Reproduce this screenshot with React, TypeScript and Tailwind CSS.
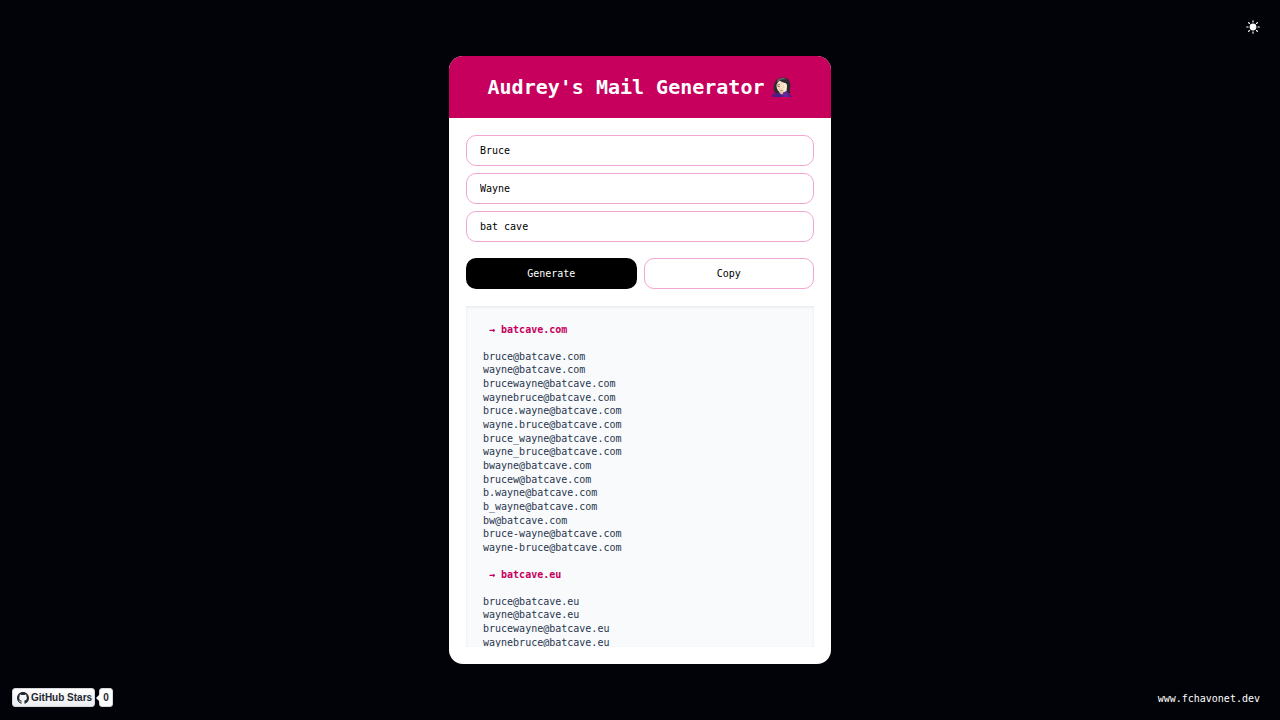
import { useState } from "react";

const MONO = "font-['DejaVu_Sans_Mono',monospace]";

const FIELDS = [
  { id: "first-name", label: "First name" },
  { id: "last-name", label: "Last name" },
  { id: "company", label: "Company" },
] as const;

type Values = Record<(typeof FIELDS)[number]["id"], string>;

function localParts(first: string, last: string): string[] {
  const f = first.charAt(0);
  const l = last.charAt(0);
  return [
    first,
    last,
    first + last,
    last + first,
    `${first}.${last}`,
    `${last}.${first}`,
    `${first}_${last}`,
    `${last}_${first}`,
    f + last,
    first + l,
    `${f}.${last}`,
    `${f}_${last}`,
    f + l,
    `${first}-${last}`,
    `${last}-${first}`,
  ];
}

function buildGroups(values: Values) {
  const clean = (text: string) => text.toLowerCase().replace(/\s+/g, "");
  const names = localParts(clean(values["first-name"]), clean(values["last-name"]));
  return ["com", "eu"].map((tld) => {
    const domain = `${clean(values.company)}.${tld}`;
    return { domain, mails: names.map((name) => `${name}@${domain}`) };
  });
}

function FacepalmEmoji() {
  return (
    <svg viewBox="0 0 40 40" className="size-5 shrink-0" role="img" aria-label="Woman facepalming">
      <path d="M4 29C2 18 5 2 20 1c15-1 19 13 16 22-1 4 0 6 1 9l-14 3-14-2z" fill="#2c2a30" />
      <path d="M10 7c5-6 14-6 19-2-7-1-14 0-18 5z" fill="#6a6768" />
      <path d="M0 40c0-6 4-8 11-8l13 1c8-1 14 1 16 7z" fill="#4b1d86" />
      <path d="M15 26h9v7c-3 3-7 2-9-1z" fill="#d9b292" />
      <path d="M9 17c0-4 3-6 6-10 4 3 9 4 13 6 3 8 0 18-9 18-6 0-10-7-10-14z" fill="#f4d9bc" />
      <path d="M15 26c2 2 5 2 7 0" fill="none" stroke="#9c5a48" strokeWidth="1.4" />
      <path d="M11 16l4-1M12 19h3" fill="none" stroke="#5a4038" strokeWidth="1.3" strokeLinecap="round" />
      <path d="M16 21c1-5 5-8 9-9 3 0 5 2 5 6l-1 11-6 3c2-4 1-7-2-9z" fill="#fdebd3" />
      <path d="M17 20l7-4M19 23l6-3" stroke="#d3a888" strokeWidth="1" fill="none" />
      <path d="M22 31l7-3 6 12H22z" fill="#5f2a9d" />
    </svg>
  );
}

function SunIcon() {
  return (
    <svg viewBox="0 0 16 16" className="size-[14px]" fill="currentColor" aria-hidden="true">
      <circle cx="8" cy="8" r="3.9" />
      <path
        d="M8 .8v1.6M8 13.6v1.6M.8 8h1.6M13.6 8h1.6M2.9 2.9l1.1 1.1M12 12l1.1 1.1M2.9 13.1l1.1-1.1M12 4l1.1-1.1"
        stroke="currentColor"
        strokeWidth="1.3"
        strokeLinecap="round"
      />
    </svg>
  );
}

function GitHubMark() {
  return (
    <svg viewBox="0 0 16 16" className="size-3" fill="currentColor" aria-hidden="true">
      <path d="M8 0C3.58 0 0 3.58 0 8c0 3.54 2.29 6.53 5.47 7.59.4.07.55-.17.55-.38 0-.19-.01-.82-.01-1.49-2.01.37-2.53-.49-2.69-.94-.09-.23-.48-.94-.82-1.13-.28-.15-.68-.52-.01-.53.63-.01 1.08.58 1.23.82.72 1.21 1.87.87 2.33.66.07-.52.28-.87.51-1.07-1.78-.2-3.64-.89-3.64-3.95 0-.87.31-1.59.82-2.15-.08-.2-.36-1.02.08-2.12 0 0 .67-.21 2.2.82.64-.18 1.32-.27 2-.27s1.36.09 2 .27c1.53-1.04 2.2-.82 2.2-.82.44 1.1.16 1.92.08 2.12.51.56.82 1.27.82 2.15 0 3.07-1.87 3.75-3.65 3.95.29.25.54.73.54 1.48 0 1.07-.01 1.93-.01 2.2 0 .21.15.46.55.38A8.01 8.01 0 0 0 16 8c0-4.42-3.58-8-8-8z" />
    </svg>
  );
}

export default function App() {
  const [values, setValues] = useState<Values>({
    "first-name": "Bruce",
    "last-name": "Wayne",
    company: "bat cave",
  });
  const [groups, setGroups] = useState(() => buildGroups(values));

  const copyAll = () => {
    void navigator.clipboard?.writeText(groups.flatMap((g) => g.mails).join("\n"));
  };

  return (
    <div className={`relative flex h-screen flex-col items-center bg-[#020308] px-4 py-14 text-[10px] leading-[14px] ${MONO}`}>
      <button type="button" aria-label="Toggle theme" className="absolute top-5 right-5 text-white">
        <SunIcon />
      </button>

      <main className="flex min-h-0 w-full max-w-[382px] flex-1 flex-col overflow-hidden rounded-[14px] bg-white">
        <header className="flex items-center justify-center gap-2 bg-[#c6005c] py-[17px] text-white">
          <h1 className="text-xl leading-7 font-bold whitespace-nowrap">Audrey's Mail Generator</h1>
          <FacepalmEmoji />
        </header>

        <form
          className="flex min-h-0 flex-1 flex-col p-[17px]"
          onSubmit={(event) => {
            event.preventDefault();
            setGroups(buildGroups(values));
          }}
        >
          <div className="flex flex-col gap-[7px]">
            {FIELDS.map(({ id, label }) => (
              <div key={id} className="flex">
                <label htmlFor={id} className="hidden">
                  {label}
                </label>
                <input
                  id={id}
                  type="text"
                  value={values[id]}
                  onChange={(event) => setValues({ ...values, [id]: event.target.value })}
                  className="h-[31px] w-full rounded-[10px] border border-[#f2a6d2] bg-white px-[13px] text-black outline-none"
                />
              </div>
            ))}
          </div>

          <div className="mt-4 grid grid-cols-2 gap-[7px]">
            <button type="submit" className="h-[31px] rounded-[10px] bg-black text-white">
              Generate
            </button>
            <button
              type="button"
              onClick={copyAll}
              className="h-[31px] rounded-[10px] border border-[#f2a6d2] bg-white text-black"
            >
              Copy
            </button>
          </div>

          <section
            aria-label="Generated addresses"
            className="mt-[17px] min-h-0 flex-1 overflow-y-auto bg-[#f9fafc] px-[17px] pt-[17px] text-[#27364c] shadow-[inset_0_1px_3px_rgba(0,0,0,0.08)] [scrollbar-width:none]"
          >
            {groups.map(({ domain, mails }) => (
              <div key={domain} className="mb-[13px]">
                <h2 className="mb-[13px] pl-[6px] font-bold text-[#c6005c]">→ {domain}</h2>
                <ul className="grid h-[205px] auto-rows-fr items-center">
                  {mails.map((mail) => (
                    <li key={mail} className="leading-none">
                      {mail}
                    </li>
                  ))}
                </ul>
              </div>
            ))}
          </section>
        </form>
      </main>

      <div className="absolute bottom-[13px] left-3 flex items-center gap-1 font-['Liberation_Sans',Arial,sans-serif] font-bold text-[#24292f]">
        <a
          href="https://github.com/fchavonet"
          className="flex h-[19px] items-center gap-[2px] rounded-[3px] border border-[#d5d7da] bg-linear-to-b from-white to-[#ebedf0] pr-[2px] pl-1"
        >
          <GitHubMark />
          GitHub Stars
        </a>
        <a
          href="https://github.com/fchavonet?tab=repositories"
          aria-label="0 stars"
          className="relative flex h-[19px] items-center rounded-[3px] border border-[#d5d7da] bg-white px-[3px]"
        >
          <svg viewBox="0 0 4 8" className="absolute top-[5px] -left-1 h-2 w-1" aria-hidden="true">
            <path d="M4 0v8L0 4z" fill="#fff" />
          </svg>
          0
        </a>
      </div>

      <a href="https://www.fchavonet.dev" className="absolute right-5 bottom-[14px] text-white">
        www.fchavonet.dev
      </a>
    </div>
  );
}
